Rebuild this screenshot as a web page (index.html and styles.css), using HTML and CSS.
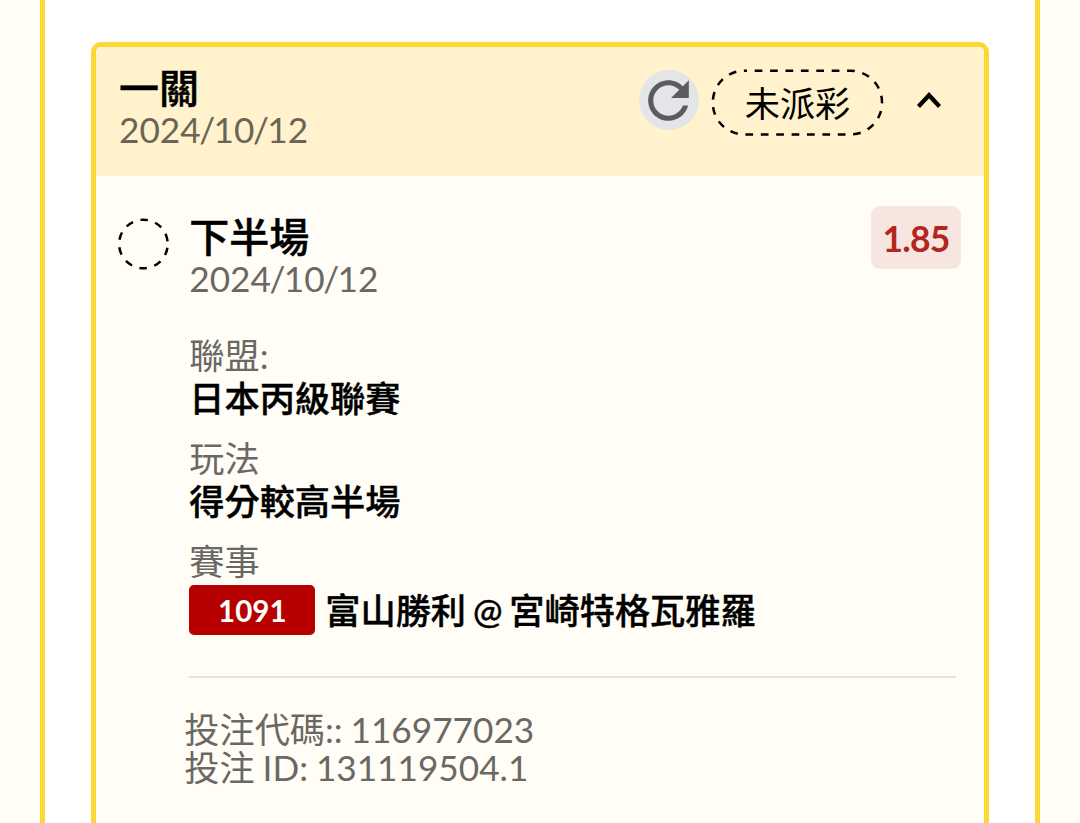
FILE: index.html
```
<!DOCTYPE html>
<html lang="zh-Hant">
<head>
    <meta charset="UTF-8">
    <title>投注</title>
    <link rel="stylesheet" href="styles.css">
</head>
<body>
    <div class="panel">
        <div class="ticket">
            <div class="ticket-header">
                <div class="heading">
                    <h2>一關</h2>
                    <p class="date">2024<span class="slash">/</span>10<span class="slash">/</span>12</p>
                </div>
                <button class="refresh">
                    <svg width="61" height="61" viewBox="0 0 24 24"><path fill="#5b5c5f" d="M17.65 6.35C16.2 4.9 14.21 4 12 4c-4.42 0-7.99 3.58-7.99 8s3.57 8 7.99 8c3.73 0 6.84-2.55 7.73-6h-2.08c-.82 2.33-3.04 4-5.65 4-3.31 0-6-2.69-6-6s2.69-6 6-6c1.66 0 3.14.69 4.22 1.78L13 11h7V4z"/></svg>
                </button>
                <div class="status">
                    <svg class="status-outline" width="173" height="67" viewBox="0 0 173 67"><rect x="1.8" y="1.8" width="169.2" height="63.6" rx="31.5"/></svg>
                    <span>未派彩</span>
                </div>
                <svg class="chevron" width="26" height="20" viewBox="0 0 26 20"><path d="M2.5 16.5L13 5.2L23.5 16.5"/></svg>
            </div>
            <div class="bet">
                <svg class="bet-state" width="52" height="52" viewBox="0 0 52 52"><circle cx="26.4" cy="26" r="24.3"/></svg>
                <div class="bet-body">
                    <div class="bet-top">
                        <div class="heading">
                            <h2>下半場</h2>
                            <p class="date">2024<span class="slash">/</span>10<span class="slash">/</span>12</p>
                        </div>
                        <span class="odds">1.85</span>
                    </div>
                    <dl class="details">
                        <dt>聯盟:</dt>
                        <dd>日本丙級聯賽</dd>
                        <dt>玩法</dt>
                        <dd>得分較高半場</dd>
                        <dt>賽事</dt>
                        <dd class="match"><span class="match-no">1091</span>富山勝利 @ 宮崎特格瓦雅羅</dd>
                    </dl>
                    <div class="codes">
                        <p>投注代碼:: 116977023</p>
                        <p>投注 ID: 131119504.1</p>
                    </div>
                </div>
            </div>
        </div>
    </div>
</body>
</html>
```
FILE: styles.css
```
* {
    box-sizing: border-box;
}
body {
    margin: 0;
    height: 823px;
    overflow: hidden;
    background: #fffdf5;
    font-family: Lato, "Noto Sans CJK TC", sans-serif;
    font-size: 35.2px;
    line-height: 42px;
    color: #000;
}
h2, p, dl, dd {
    margin: 0;
}
.panel {
    height: 823px;
    margin: 0 40px;
    padding: 42px 46px 0;
    background: #fff;
    border: solid #fdd835;
    border-width: 0 5px;
}
.ticket {
    height: 800px;
    background: #fffdf5;
    border: 5px solid #fdd835;
    border-radius: 10px;
}
.ticket-header {
    display: flex;
    align-items: flex-start;
    height: 129px;
    padding: 20px 42px 0 23px;
    background: #fff2cc;
    border-radius: 5px 5px 0 0;
}
.heading {
    flex: 1;
}
.heading h2 {
    font-size: 40px;
    font-weight: 500;
    line-height: 42px;
    -webkit-text-stroke: 0.5px #000;
}
.date {
    line-height: 40px;
    margin-bottom: 2px;
    color: #6a6865;
}
.slash {
    margin: 0 -1.5px;
}
.ticket-header .date {
    color: #6a6553;
}
.refresh {
    display: flex;
    align-items: center;
    justify-content: center;
    width: 60px;
    height: 60px;
    margin: 3px 12.4px 0 0;
    padding: 0;
    border: none;
    border-radius: 50%;
    background: #e4e5e8;
}
.refresh svg {
    flex: none;
}
.status {
    position: relative;
    width: 173px;
    height: 67px;
    margin: 2px 32px 0 0;
    line-height: 69px;
    text-align: center;
}
.status-outline {
    position: absolute;
    top: 0;
    left: 0;
}
.status-outline rect, .bet-state circle {
    fill: none;
    stroke: #000;
    stroke-width: 2.5;
    stroke-dasharray: 7.7 7.7;
    stroke-dashoffset: 5;
}
.bet-state circle {
    stroke-dasharray: 7.6 7.668;
    stroke-dashoffset: -3.85;
}
.chevron {
    margin-top: 23px;
}
.chevron path {
    fill: none;
    stroke: #000;
    stroke-width: 4.2;
}
.bet {
    display: flex;
    padding: 40px 23px 0 21.3px;
}
.bet-state {
    flex: none;
    margin: 2px 20px 0 0;
}
.bet-body {
    flex: 1;
}
.bet-top {
    display: flex;
    align-items: flex-start;
}
.odds {
    width: 90px;
    height: 63px;
    margin-top: -10px;
    border-radius: 9px;
    background: #f7e6e0;
    color: #b3261e;
    font-size: 35.5px;
    font-weight: bold;
    letter-spacing: -0.8px;
    line-height: 65px;
    text-align: center;
}
.details {
    margin: 34px 5px 0 0;
    padding-bottom: 41px;
    border-bottom: 2px solid #e5e3dc;
}
.details dt {
    line-height: 43px;
    color: #6a6865;
}
.details dd {
    margin-bottom: 18px;
    font-weight: 500;
    -webkit-text-stroke: 0.4px #000;
}
.details .match {
    display: flex;
    align-items: center;
    height: 50px;
    margin: 2px 0 0;
    line-height: 44px;
    word-spacing: -2px;
}
.match-no {
    width: 126px;
    height: 50px;
    margin-right: 10px;
    border-radius: 5px;
    background: #b70000;
    color: #fff;
    font-size: 29.5px;
    font-weight: bold;
    line-height: 51px;
    text-align: center;
    -webkit-text-stroke: 0;
}
.codes {
    margin: 32px 0 0 -5px;
    line-height: 38px;
    word-spacing: -1.1px;
    color: #6a6864;
}
```
